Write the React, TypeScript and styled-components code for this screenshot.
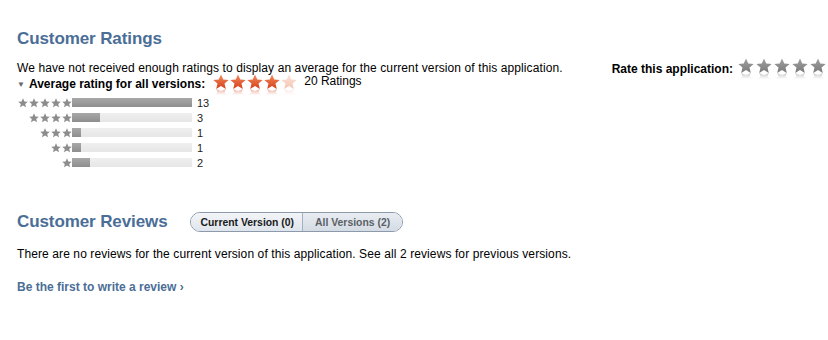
import React from "react";
import styled, { createGlobalStyle } from "styled-components";

const GlobalStyle = createGlobalStyle`
  html, body {
    margin: 0;
    padding: 0;
    background: #fff;
  }
  body {
    font-family: "Liberation Sans", Arial, sans-serif;
    font-size: 12px;
    color: #000;
  }
`;

const Page = styled.div`
  width: 828px;
  height: 340px;
  box-sizing: border-box;
  padding: 29px 0 0 17px;
  overflow: hidden;
`;

const Title = styled.h2`
  margin: 0;
  font-size: 17px;
  font-weight: 700;
  color: #4a6e96;
  line-height: 20px;
  letter-spacing: -0.1px;
`;

const RatingsHead = styled.div`
  display: flex;
  justify-content: space-between;
  margin-top: 12px;
  padding-right: 2px;
`;

const Message = styled.p`
  margin: 0;
  font-size: 12px;
  line-height: 14px;
  letter-spacing: 0.1px;
`;

const AverageRow = styled.div`
  display: flex;
  align-items: flex-start;
  height: 20px;
  margin-top: 2px;
`;

const Caret = styled.span`
  font-size: 8px;
  color: #666;
  line-height: 14px;
  margin-right: 4px;
  margin-top: 1px;
`;

const BoldLabel = styled.span`
  font-weight: 700;
  font-size: 12px;
  line-height: 14px;
`;

const StarRow = styled.div<{ $gap: number }>`
  display: flex;
  gap: ${p => p.$gap}px;
`;

const AvgStars = styled(StarRow)`
  margin: -3px 0 0 8px;
`;

const RatingsCount = styled.span`
  margin: -3px 0 0 7px;
  line-height: 14px;
`;

const RateBox = styled.div`
  display: flex;
  align-items: flex-start;
  height: 28px;
  padding-top: 1px;
`;

const RateStars = styled(StarRow)`
  margin: -4px 0 0 5px;
`;

const Histogram = styled.div`
  display: grid;
  grid-template-columns: 55px 120px auto;
  grid-auto-rows: 15px;
  align-items: center;
  margin-top: -2px;
`;

const HistStars = styled.div`
  display: flex;
  justify-content: flex-end;
  gap: 1px;
`;

const Track = styled.div`
  height: 9px;
  background: linear-gradient(#efefef, #e6e6e6);
`;

const Fill = styled.div`
  height: 100%;
  background: linear-gradient(#a8a8a8, #8e8e8e);
`;

const Count = styled.span`
  font-size: 11px;
  padding-left: 5px;
  color: #222;
`;

const ReviewsHead = styled.div`
  display: flex;
  align-items: center;
  margin-top: 42px;
  gap: 22px;
`;

const Segmented = styled.div`
  display: flex;
  height: 18px;
  border: 1px solid #8d9aab;
  border-radius: 10px;
  overflow: hidden;
`;

const Segment = styled.div<{ $active?: boolean }>`
  display: flex;
  align-items: center;
  padding: ${p => (p.$active ? "0 8px 0 10px" : "0 12px")};
  font-size: 10.4px;
  font-weight: 700;
  color: ${p => (p.$active ? "#1a1a1a" : "#5b5f66")};
  background: ${p =>
    p.$active
      ? "linear-gradient(#f3f5f8, #dfe5ec)"
      : "linear-gradient(#e9edf2, #d4dbe4)"};
  & + & {
    border-left: 1px solid #a6b1bf;
  }
`;

const ReviewText = styled.p`
  margin: 15px 0 0;
  font-size: 12px;
  line-height: 14px;
  letter-spacing: 0.1px;
`;

const WriteLink = styled.a`
  display: inline-block;
  margin-top: 19px;
  font-size: 12px;
  font-weight: 700;
  color: #4a6e96;
  text-decoration: none;
`;

const STAR =
  "10,0.6 12.8,6.9 19.6,7.4 14.4,11.9 16,18.6 10,15 4,18.6 5.6,11.9 0.4,7.4 7.2,6.9";

type Tone = "orange" | "pale" | "grey";

const tones: Record<Tone, [string, string]> = {
  orange: ["#f28a5c", "#d6401c"],
  pale: ["#fbe2d8", "#f5c6b5"],
  grey: ["#a0a0a0", "#7a7a7a"],
};

let gid = 0;

// star with a short faded mirror image underneath
const ReflectStar = ({ tone }: { tone: Tone }) => {
  const id = `s${gid++}`;
  const [a, b] = tones[tone];
  return (
    <svg width={16} height={25.6} viewBox="0 0 20 32">
      <defs>
        <linearGradient id={`${id}g`} x1="0" y1="0" x2="0" y2="1">
          <stop offset="0" stopColor={a} />
          <stop offset="1" stopColor={b} />
        </linearGradient>
        <linearGradient id={`${id}r`} x1="0" y1="1" x2="0" y2="0">
          <stop offset="0" stopColor={b} stopOpacity="0.4" />
          <stop offset="0.6" stopColor={b} stopOpacity="0" />
        </linearGradient>
      </defs>
      <polygon points={STAR} fill={`url(#${id}g)`} />
      <g transform="translate(0 31.8) scale(1 -0.7)">
        <polygon points={STAR} fill={`url(#${id}r)`} />
      </g>
    </svg>
  );
};

const SmallStar = () => (
  <svg width={10} height={10} viewBox="0 0 20 20">
    <polygon points={STAR} fill="#8c8c8c" />
  </svg>
);

const histogram = [
  { stars: 5, count: 13 },
  { stars: 4, count: 3 },
  { stars: 3, count: 1 },
  { stars: 2, count: 1 },
  { stars: 1, count: 2 },
];
const maxCount = 13;

export default function App() {
  return (
    <Page>
      <GlobalStyle />
      <Title>Customer Ratings</Title>
      <RatingsHead>
        <div>
          <Message>
            We have not received enough ratings to display an average for the current version of
            this application.
          </Message>
          <AverageRow>
            <Caret>▼</Caret>
            <BoldLabel>Average rating for all versions:</BoldLabel>
            <AvgStars $gap={1}>
              {[0, 1, 2, 3, 4].map(i => (
                <ReflectStar key={i} tone={i < 4 ? "orange" : "pale"} />
              ))}
            </AvgStars>
            <RatingsCount>20 Ratings</RatingsCount>
          </AverageRow>
        </div>
        <RateBox>
          <BoldLabel>Rate this application:</BoldLabel>
          <RateStars $gap={2}>
            {[0, 1, 2, 3, 4].map(i => (
              <ReflectStar key={i} tone="grey" />
            ))}
          </RateStars>
        </RateBox>
      </RatingsHead>

      <Histogram>
        {histogram.map(row => (
          <React.Fragment key={row.stars}>
            <HistStars>
              {Array.from({ length: row.stars }).map((_, i) => (
                <SmallStar key={i} />
              ))}
            </HistStars>
            <Track>
              <Fill style={{ width: `${(row.count / maxCount) * 100}%` }} />
            </Track>
            <Count>{row.count}</Count>
          </React.Fragment>
        ))}
      </Histogram>

      <ReviewsHead>
        <Title>Customer Reviews</Title>
        <Segmented>
          <Segment $active>Current Version (0)</Segment>
          <Segment>All Versions (2)</Segment>
        </Segmented>
      </ReviewsHead>
      <ReviewText>
        There are no reviews for the current version of this application. See all 2 reviews for
        previous versions.
      </ReviewText>
      <WriteLink href="#">Be the first to write a review ›</WriteLink>
    </Page>
  );
}
